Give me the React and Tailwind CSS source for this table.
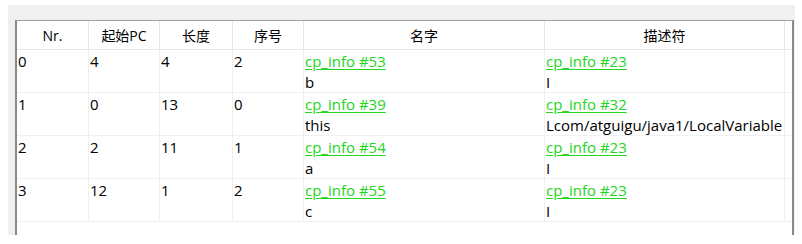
import React from "react";

const rows = [
  { nr: "0", pc: "4", len: "4", idx: "2", name: "cp_info #53", nameV: "b", desc: "cp_info #23", descV: "I" },
  { nr: "1", pc: "0", len: "13", idx: "0", name: "cp_info #39", nameV: "this", desc: "cp_info #32", descV: "Lcom/atguigu/java1/LocalVariable" },
  { nr: "2", pc: "2", len: "11", idx: "1", name: "cp_info #54", nameV: "a", desc: "cp_info #23", descV: "I" },
  { nr: "3", pc: "12", len: "1", idx: "2", name: "cp_info #55", nameV: "c", desc: "cp_info #23", descV: "I" },
];

const cols = "grid grid-cols-[72px_71px_73px_71px_241px_240px]";
const font = { fontFamily: '"Open Sans", "Noto Sans CJK SC", sans-serif' };

function Link({ children }) {
  return <span className="text-[#22d622] underline decoration-[#22d622] underline-offset-2">{children}</span>;
}

export default function App() {
  return (
    <div className="w-[802px] h-[244px] bg-white overflow-hidden" style={font}>
      <div className="ml-[8px] mt-[5px] w-[787px] h-[230px] bg-[#f0f0f0] pl-[7px] pt-[15px] pr-[1px]">
        <div className="h-[215px] bg-white border-t border-t-[#a0a0a0] border-l-2 border-l-[#8a8a8a] border-r-2 border-r-[#8a8a8a] text-[15px] text-black">
          <div className={`${cols} h-[29px] border-b border-b-[#e6e6e6]`}>
            {["Nr.", "起始PC", "长度", "序号", "名字", "描述符"].map((h) => (
              <div key={h} className="flex items-center justify-center border-r border-r-[#e6e6e6] text-[14px]">
                {h}
              </div>
            ))}
          </div>
          {rows.map((r) => (
            <div key={r.nr} className={`${cols} h-[43px] border-b border-b-[#f0f0f0] leading-[21px]`}>
              <div className="border-r border-r-[#f0f0f0] pl-[1px] pt-[1px]">{r.nr}</div>
              <div className="border-r border-r-[#f0f0f0] pl-[1px] pt-[1px]">{r.pc}</div>
              <div className="border-r border-r-[#f0f0f0] pl-[1px] pt-[1px]">{r.len}</div>
              <div className="border-r border-r-[#f0f0f0] pl-[1px] pt-[1px]">{r.idx}</div>
              <div className="border-r border-r-[#f0f0f0] pl-[1px] pt-[1px] flex flex-col">
                <Link>{r.name}</Link>
                <span>{r.nameV}</span>
              </div>
              <div className="border-r border-r-[#f0f0f0] pl-[1px] pt-[1px] flex flex-col whitespace-nowrap">
                <Link>{r.desc}</Link>
                <span>{r.descV}</span>
              </div>
            </div>
          ))}
        </div>
      </div>
    </div>
  );
}
